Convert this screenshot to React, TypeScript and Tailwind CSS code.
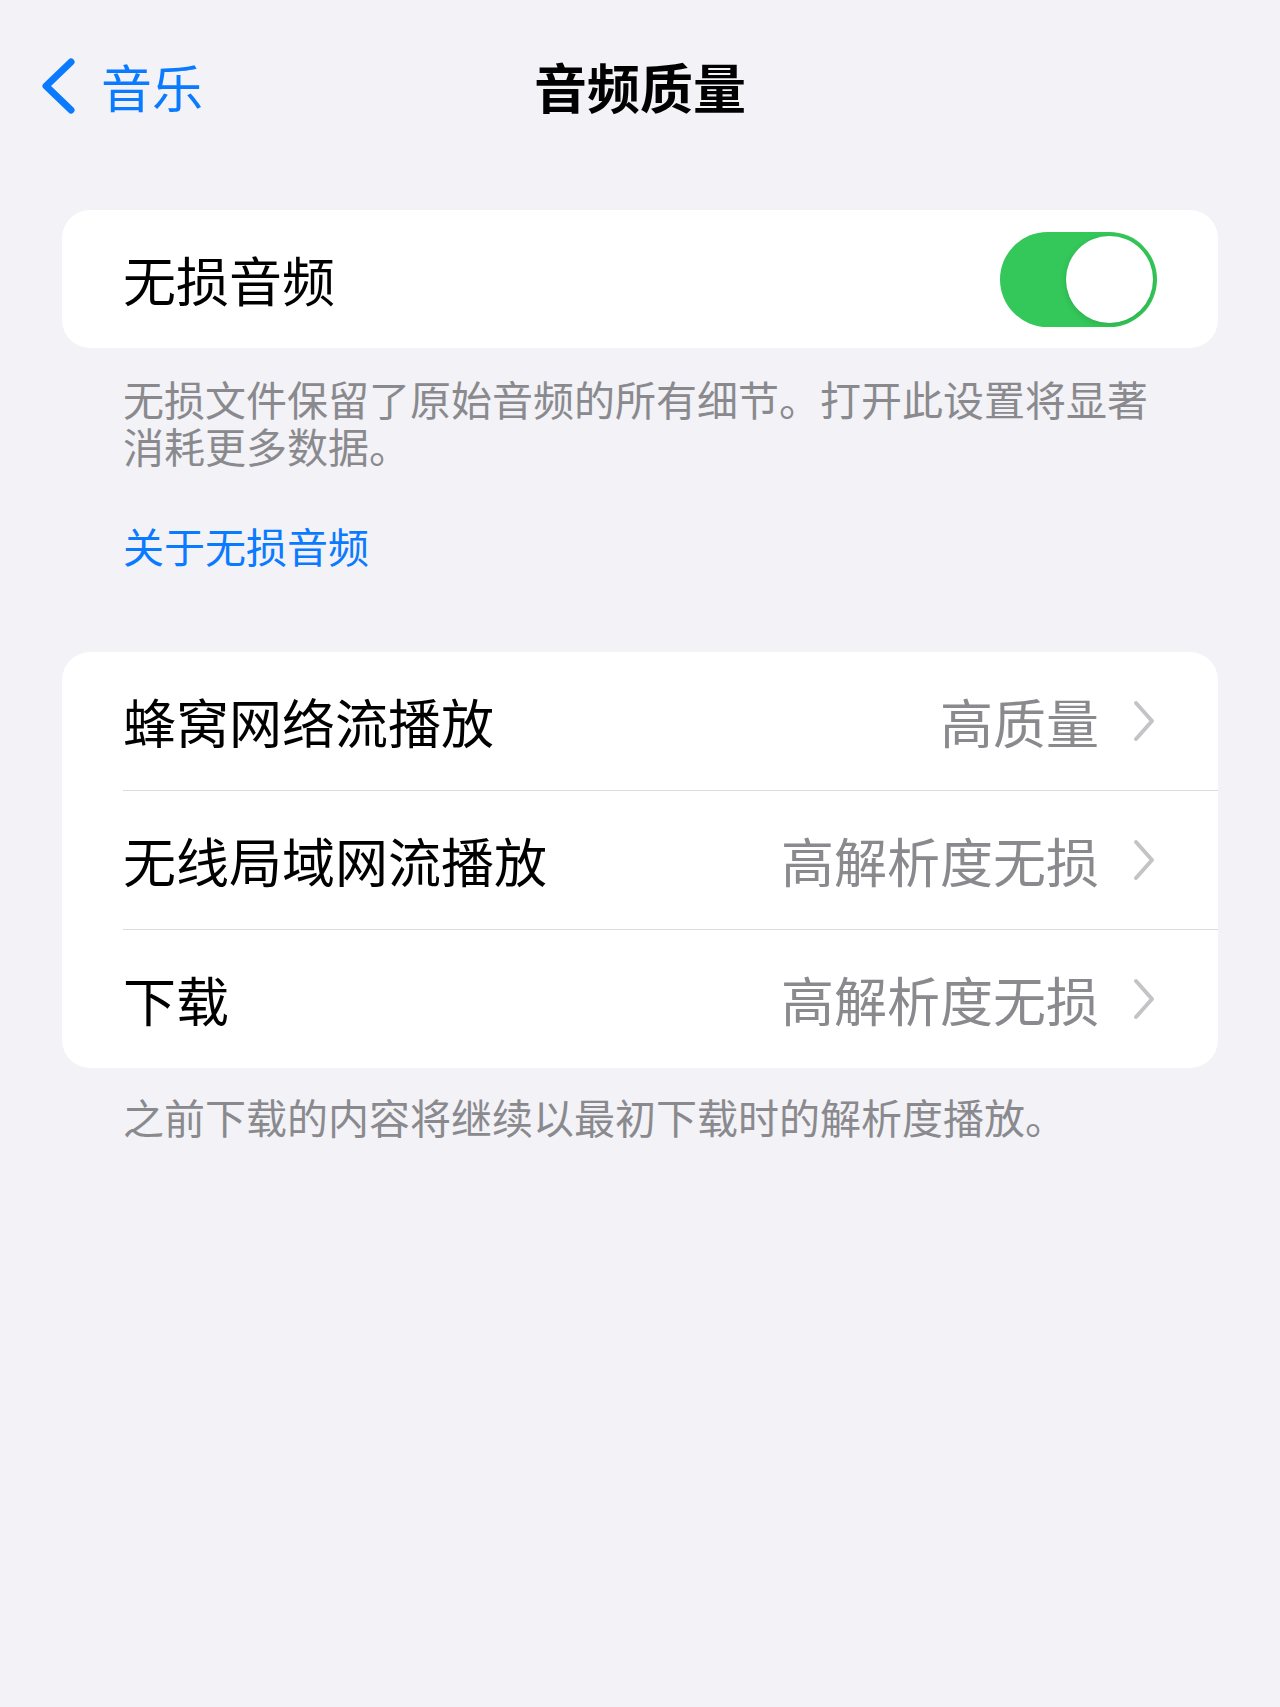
import { useState } from "react";

const BackChevron = () => (
	<svg width="36" height="56" viewBox="0 0 36 56" fill="none" className="shrink-0">
		<path
			d="M31 4 L6 28 L31 52"
			stroke="#0a7aff"
			strokeWidth="7"
			strokeLinecap="round"
			strokeLinejoin="round"
		/>
	</svg>
);

const RowChevron = () => (
	<svg width="22" height="42" viewBox="0 0 22 42" fill="none" className="shrink-0">
		<path
			d="M3 3 L19 21 L3 39"
			stroke="#c4c4c7"
			strokeWidth="4"
			strokeLinecap="round"
			strokeLinejoin="round"
		/>
	</svg>
);

const Toggle = ({ on, onChange }: { on: boolean; onChange: () => void }) => (
	<button
		onClick={onChange}
		className={`w-[157px] h-[95px] rounded-full p-[4px] flex items-center transition-colors ${
			on ? "bg-[#34c759] justify-end" : "bg-[#e9e9eb] justify-start"
		}`}
	>
		<span className="block w-[87px] h-[87px] rounded-full bg-white shadow-[0_2px_6px_rgba(0,0,0,0.12)]" />
	</button>
);

const rows = [
	{ label: "蜂窝网络流播放", value: "高质量" },
	{ label: "无线局域网流播放", value: "高解析度无损" },
	{ label: "下载", value: "高解析度无损" },
];

export default function App() {
	const [lossless, setLossless] = useState(true);

	return (
		<div className="min-h-[1707px] bg-[#f2f2f7] font-['Noto_Sans_CJK_SC',sans-serif] text-black">
			{/* Navigation bar */}
			<div className="pt-[38px] h-[134px] grid grid-cols-[1fr_auto_1fr] items-center">
				<button className="flex items-center gap-[25px] pl-[40px] text-[#0a7aff] text-[51px] leading-none">
					<BackChevron />
					<span>音乐</span>
				</button>
				<h1 className="text-[53px] leading-none font-bold">音频质量</h1>
				<div />
			</div>

			{/* Lossless switch */}
			<div className="mt-[76px] mx-[62px] h-[138px] bg-white rounded-[28px] flex items-center justify-between pl-[61px] pr-[61px]">
				<span className="text-[53px] leading-none">无损音频</span>
				<Toggle on={lossless} onChange={() => setLossless(!lossless)} />
			</div>
			<p className="mt-[27px] pl-[123px] pr-[127px] text-[41px] leading-[47px] text-[#8a8a8e]">
				无损文件保留了原始音频的所有细节。打开此设置将显著消耗更多数据。
			</p>
			<a className="block mt-[53px] px-[123px] text-[41px] leading-[47px] text-[#0a7aff]">
				关于无损音频
			</a>

			{/* Streaming quality */}
			<div className="mt-[83px] mx-[62px] bg-white rounded-[28px] overflow-hidden">
				{rows.map((row, i) => (
					<div key={row.label}>
						{i > 0 && <div className="ml-[61px] h-px bg-[#dcdce0]" />}
						<div className="h-[138px] flex items-center justify-between pl-[61px] pr-[63px]">
							<span className="text-[53px] leading-none">{row.label}</span>
							<div className="flex items-center gap-[34px]">
								<span className="text-[53px] leading-none text-[#8a8a8e]">{row.value}</span>
								<RowChevron />
							</div>
						</div>
					</div>
				))}
			</div>
			<p className="mt-[25px] px-[123px] text-[41px] leading-[47px] text-[#8a8a8e]">
				之前下载的内容将继续以最初下载时的解析度播放。
			</p>
		</div>
	);
}
